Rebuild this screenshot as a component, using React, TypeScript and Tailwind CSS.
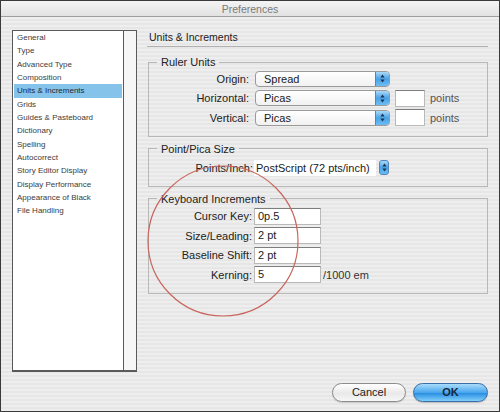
const items = [
  'General',
  'Type',
  'Advanced Type',
  'Composition',
  'Units & Increments',
  'Grids',
  'Guides & Pasteboard',
  'Dictionary',
  'Spelling',
  'Autocorrect',
  'Story Editor Display',
  'Display Performance',
  'Appearance of Black',
  'File Handling',
];

function Arrows() {
  return (
    <svg width="5" height="9" viewBox="0 0 5 9">
      <path d="M2.5 0.5L4.6 3.4H0.4Z" fill="#1d3550" />
      <path d="M2.5 8.5L4.6 5.6H0.4Z" fill="#1d3550" />
    </svg>
  );
}

function Popup({ value }: { value: string }) {
  return (
    <div className="flex h-[16px] w-[135px] overflow-hidden rounded-[4px] border border-[#9a9a9a] bg-[linear-gradient(180deg,#ffffff,#f1f1f1)]">
      <div className="flex-1 pl-[8px] text-[11px] leading-[14px] text-[#1a1a1a]">{value}</div>
      <div className="flex w-[14px] items-center justify-center border-l border-[#4f86bd] bg-[linear-gradient(180deg,#a9dafa,#4aa2e6_50%,#6cbdf4)]">
        <Arrows />
      </div>
    </div>
  );
}

function Field({ value, w = 'w-[67px]' }: { value?: string; w?: string }) {
  return (
    <div
      className={`h-[17px] ${w} border border-[#b9b9b9] border-t-[#7d7d7d] bg-white pl-[3px] text-[11px] leading-[15px] text-[#1a1a1a]`}
    >
      {value}
    </div>
  );
}

export default function App() {
  return (
    <div className="relative flex h-[412px] w-[500px] flex-col border border-[#3a3a3a] bg-[repeating-linear-gradient(180deg,#eeeeee_0px,#eeeeee_2px,#e6e6e6_2px,#e6e6e6_4px)] font-['Liberation_Sans',Arial,sans-serif] text-[#222]">
      {/* title bar */}
      <div className="flex h-[16px] items-center justify-center border-b border-[#9d9d9d] bg-[linear-gradient(180deg,#f4f4f4,#e2e2e2)]">
        <span className="text-[10.5px] leading-[14px] text-[#7a7a7a]">Preferences</span>
      </div>

      <div className="flex flex-1 flex-col px-[11px] pt-[13px]">
        <div className="flex gap-[10px]">
          {/* category list */}
          <div className="flex h-[342px] w-[125px] border border-[#5a5a5a] border-b-2 bg-white">
            <div className="flex-1 px-[1px]">
              {items.map((it) => (
                <div
                  key={it}
                  className={`h-[13.33px] pl-[3px] text-[8px] leading-[13.33px] ${
                    it === 'Units & Increments' ? 'bg-[#86c3ea] text-[#1e2a36]' : 'text-[#3c3c3c]'
                  }`}
                >
                  {it}
                </div>
              ))}
            </div>
            <div className="w-[13px] border-l border-[#5a5a5a] bg-[#f6f6f6]" />
          </div>

          {/* right panel */}
          <div className="w-[341px]">
            <div className="h-[17px] border-b border-[#b0b0b0] pl-[2px] text-[10.5px] leading-[14px] text-[#222]">
              Units &amp; Increments
            </div>

            <fieldset className="ml-[1px] mt-[8px] w-[340px] border border-[#b8b8b8] pb-[8px]">
              <legend className="ml-[8px] px-[4px] text-[11px] leading-[14px]">Ruler Units</legend>
              {[
                ['Origin:', 'Spread', false],
                ['Horizontal:', 'Picas', true],
                ['Vertical:', 'Picas', true],
              ].map(([label, val, pts]) => (
                <div key={label as string} className="flex h-[19.5px] items-center">
                  <div className="w-[100px] text-right text-[11px] leading-[14px]">{label}</div>
                  <div className="ml-[6px]">
                    <Popup value={val as string} />
                  </div>
                  {pts && (
                    <>
                      <div className="ml-[5px]">
                        <Field w="w-[30px]" />
                      </div>
                      <span className="ml-[5px] text-[11px] leading-[14px] text-[#555]">points</span>
                    </>
                  )}
                </div>
              ))}
            </fieldset>

            <fieldset className="ml-[1px] mt-[5px] w-[340px] border border-[#b8b8b8] pb-[8px] pt-[2px]">
              <legend className="ml-[8px] px-[4px] text-[11px] leading-[14px]">Point/Pica Size</legend>
              <div className="flex h-[20px] items-center">
                <div className="w-[104px] text-right text-[11px] leading-[14px]">Points/Inch:</div>
                <div className="ml-[1px] flex h-[16px] items-center">
                  <div className="h-[16px] w-[122px] bg-white pl-[2px] text-[11px] leading-[16px] text-[#1a1a1a]">
                    PostScript (72 pts/inch)
                  </div>
                  <div className="ml-[3px] flex h-[15px] w-[10px] items-center justify-center rounded-[3px] border border-[#4f86bd] bg-[linear-gradient(180deg,#a9dafa,#4aa2e6_50%,#6cbdf4)]">
                    <Arrows />
                  </div>
                </div>
              </div>
            </fieldset>

            <fieldset className="ml-[1px] mt-[5px] w-[340px] border border-[#b8b8b8] pb-[8px] pt-[1px]">
              <legend className="ml-[8px] px-[4px] text-[11px] leading-[14px]">Keyboard Increments</legend>
              {[
                ['Cursor Key:', '0p.5', ''],
                ['Size/Leading:', '2 pt', ''],
                ['Baseline Shift:', '2 pt', ''],
                ['Kerning:', '5', '/1000 em'],
              ].map(([label, val, unit]) => (
                <div key={label} className="flex h-[19.5px] items-center">
                  <div className="w-[103px] text-right text-[11px] leading-[14px]">{label}</div>
                  <div className="ml-[2px]">
                    <Field value={val} />
                  </div>
                  {unit && <span className="ml-[2px] text-[11px] leading-[14px] text-[#333]">{unit}</span>}
                </div>
              ))}
            </fieldset>
          </div>
        </div>

        {/* buttons */}
        <div className="mt-[11px] flex justify-end gap-[7px]">
          <button className="h-[19px] w-[74px] rounded-full border border-[#8c8c8c] bg-[linear-gradient(180deg,#ffffff,#e9e9e9_55%,#f7f7f7)] text-[11px] leading-[17px] text-[#222] shadow-[0_1px_1px_rgba(0,0,0,0.15)]">
            Cancel
          </button>
          <button className="h-[19px] w-[75px] rounded-full border border-[#3a6ea6] bg-[linear-gradient(180deg,#a9dcfb,#4aa7ee_50%,#2b8fe2_55%,#7fd0fb)] text-[11px] font-bold leading-[17px] text-[#14283d] shadow-[0_1px_1px_rgba(0,0,0,0.2)]">
            OK
          </button>
        </div>
      </div>

      {/* red annotation circle */}
      <svg className="pointer-events-none absolute left-0 top-0" width="500" height="412">
        <ellipse cx="222" cy="240" rx="75" ry="75" fill="none" stroke="#c8655c" strokeWidth="1.2" />
      </svg>
    </div>
  );
}
